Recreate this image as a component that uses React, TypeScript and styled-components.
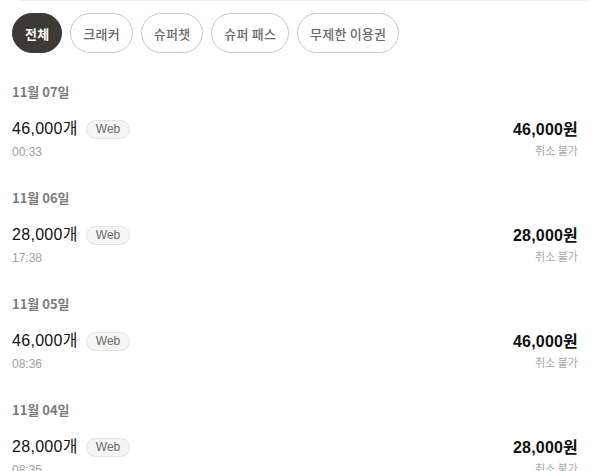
import React from "react";
import styled, { createGlobalStyle } from "styled-components";

const Global = createGlobalStyle`
  html, body { margin: 0; padding: 0; background: #fff; }
  body { font-family: "Liberation Sans", "Noto Sans CJK KR", sans-serif; }
`;

const Page = styled.div`
  width: 590px;
  box-sizing: border-box;
`;

const TopLine = styled.div`
  height: 1px;
  margin: 0 3px 0 19px;
  background: #f0f0f0;
`;

const Tabs = styled.div`
  display: flex;
  gap: 8px;
  padding: 12px 12px 0;
  margin-bottom: 1px;
`;

const Tab = styled.button<{ $active?: boolean }>`
  height: 40px;
  padding: 0 12px;
  border-radius: 20px;
  border: 1px solid ${(p) => (p.$active ? "#3d3a36" : "#cdc9c1")};
  background: ${(p) => (p.$active ? "#3d3a36" : "#fff")};
  color: ${(p) => (p.$active ? "#fff" : "#6a6a6a")};
  font-family: "Noto Sans CJK KR", sans-serif;
  font-size: 13px;
  letter-spacing: 0.2px;
  font-weight: ${(p) => (p.$active ? 700 : 500)};
  display: flex;
  align-items: center;
  justify-content: center;
  box-sizing: border-box;
  cursor: pointer;
`;

const Section = styled.section`
  padding: 29px 12px 0;
`;

const DateLabel = styled.div`
  font-family: "Noto Sans CJK KR", sans-serif;
  font-size: 13px;
  line-height: 18px;
  font-weight: 700;
  color: #7b7b7b;
`;

const Item = styled.div`
  margin-top: 17px;
  display: flex;
  justify-content: space-between;
  align-items: flex-start;
`;

const Left = styled.div`
  display: flex;
  flex-direction: column;
  gap: 4px;
`;

const TitleRow = styled.div`
  display: flex;
  align-items: center;
  gap: 8px;
`;

const Title = styled.span`
  font-size: 16px;
  line-height: 22px;
  letter-spacing: 0.3px;
  color: #111;
`;

const Badge = styled.span`
  height: 19px;
  padding: 0 9px;
  border-radius: 10px;
  border: 1px solid #e4e3df;
  background: #f5f5f3;
  color: #6b6b6b;
  font-size: 12px;
  display: flex;
  align-items: center;
  box-sizing: border-box;
`;

const Time = styled.span`
  font-size: 12px;
  line-height: 16px;
  color: #a0a0a0;
`;

const Right = styled.div`
  display: flex;
  flex-direction: column;
  align-items: flex-end;
  gap: 1px;
  padding-top: 1px;
`;

const Amount = styled.span`
  font-size: 16px;
  line-height: 22px;
  font-weight: 700;
  letter-spacing: 0.2px;
  color: #111;
`;

const Note = styled.span`
  font-family: "Noto Sans CJK KR", sans-serif;
  font-size: 11px;
  line-height: 16px;
  color: #a8a8a8;
`;

const tabs = ["전체", "크래커", "슈퍼챗", "슈퍼 패스", "무제한 이용권"];

const items = [
  { date: "11월 07일", qty: "46,000개", time: "00:33", price: "46,000원" },
  { date: "11월 06일", qty: "28,000개", time: "17:38", price: "28,000원" },
  { date: "11월 05일", qty: "46,000개", time: "08:36", price: "46,000원" },
  { date: "11월 04일", qty: "28,000개", time: "08:35", price: "28,000원" },
];

export default function App() {
  return (
    <Page>
      <Global />
      <TopLine />
      <Tabs>
        {tabs.map((t, i) => (
          <Tab key={t} $active={i === 0}>
            {t}
          </Tab>
        ))}
      </Tabs>
      {items.map((it) => (
        <Section key={it.date}>
          <DateLabel>{it.date}</DateLabel>
          <Item>
            <Left>
              <TitleRow>
                <Title>{it.qty}</Title>
                <Badge>Web</Badge>
              </TitleRow>
              <Time>{it.time}</Time>
            </Left>
            <Right>
              <Amount>{it.price}</Amount>
              <Note>취소 불가</Note>
            </Right>
          </Item>
        </Section>
      ))}
    </Page>
  );
}
